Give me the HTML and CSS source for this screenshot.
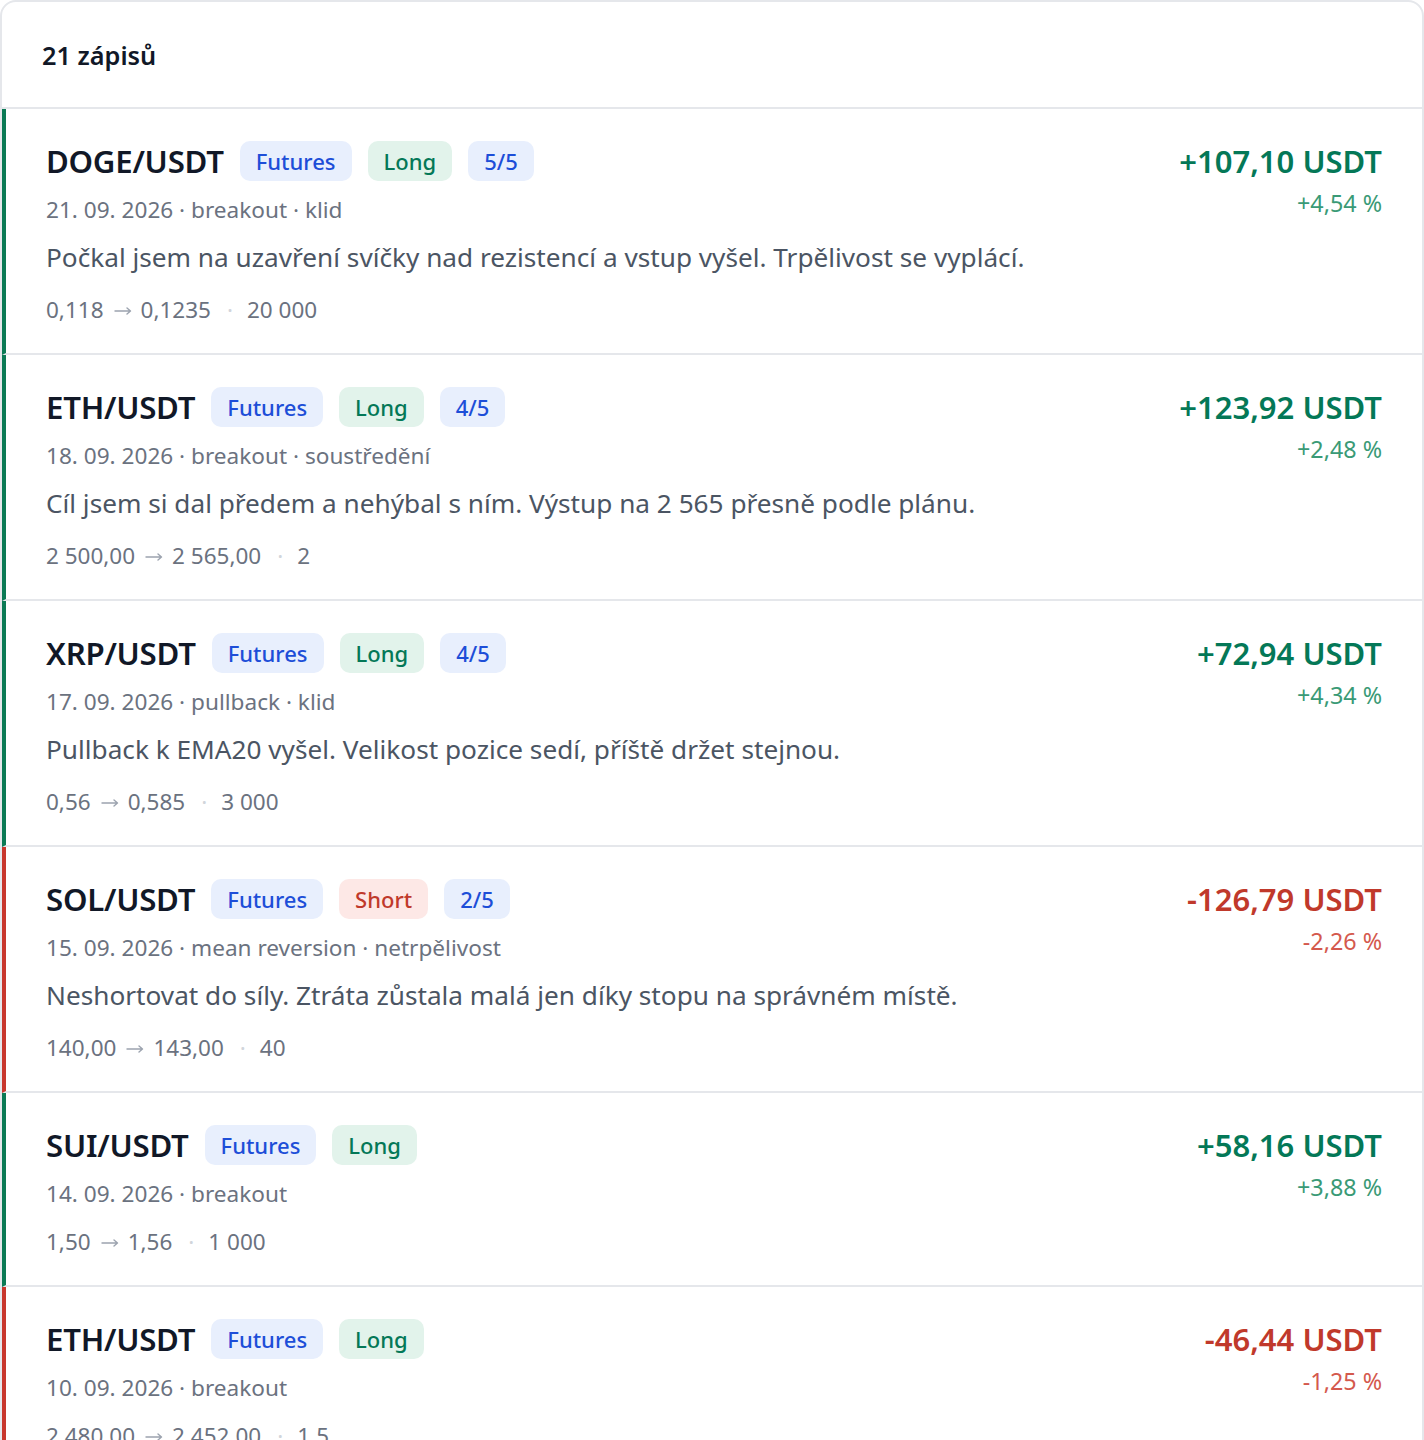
FILE: index.html
```html
<!DOCTYPE html>
<html lang="cs">
<head>
<meta charset="utf-8">
<title>Deník obchodů</title>
<link rel="stylesheet" href="styles.css">
</head>
<body>
<section class="card">
  <header class="card-head">21 zápisů</header>
  <ul class="list">
    <li class="entry win">
      <div class="main">
        <div class="title-row"><span class="pair">DOGE/USDT</span><span class="badge blue">Futures</span><span class="badge green">Long</span><span class="badge blue">5/5</span></div>
        <div class="meta">21. 09. 2026 · breakout · klid</div>
        <p class="note">Počkal jsem na uzavření svíčky nad rezistencí a vstup vyšel. Trpělivost se vyplácí.</p>
        <div class="nums"><span>0,118</span><svg class="arr" viewBox="0 0 18 10"><path d="M1 5H16.5M13 2L16.5 5L13 8"/></svg><span>0,1235</span><span class="dot">·</span><span>20 000</span></div>
      </div>
      <div class="pnl"><div class="amt">+107,10 USDT</div><div class="pct">+4,54 %</div></div>
    </li>
    <li class="entry win">
      <div class="main">
        <div class="title-row"><span class="pair">ETH/USDT</span><span class="badge blue">Futures</span><span class="badge green">Long</span><span class="badge blue">4/5</span></div>
        <div class="meta">18. 09. 2026 · breakout · soustředění</div>
        <p class="note">Cíl jsem si dal předem a nehýbal s ním. Výstup na 2 565 přesně podle plánu.</p>
        <div class="nums"><span>2 500,00</span><svg class="arr" viewBox="0 0 18 10"><path d="M1 5H16.5M13 2L16.5 5L13 8"/></svg><span>2 565,00</span><span class="dot">·</span><span>2</span></div>
      </div>
      <div class="pnl"><div class="amt">+123,92 USDT</div><div class="pct">+2,48 %</div></div>
    </li>
    <li class="entry win">
      <div class="main">
        <div class="title-row"><span class="pair">XRP/USDT</span><span class="badge blue">Futures</span><span class="badge green">Long</span><span class="badge blue">4/5</span></div>
        <div class="meta">17. 09. 2026 · pullback · klid</div>
        <p class="note">Pullback k EMA20 vyšel. Velikost pozice sedí, příště držet stejnou.</p>
        <div class="nums"><span>0,56</span><svg class="arr" viewBox="0 0 18 10"><path d="M1 5H16.5M13 2L16.5 5L13 8"/></svg><span>0,585</span><span class="dot">·</span><span>3 000</span></div>
      </div>
      <div class="pnl"><div class="amt">+72,94 USDT</div><div class="pct">+4,34 %</div></div>
    </li>
    <li class="entry loss">
      <div class="main">
        <div class="title-row"><span class="pair">SOL/USDT</span><span class="badge blue">Futures</span><span class="badge red">Short</span><span class="badge blue">2/5</span></div>
        <div class="meta">15. 09. 2026 · mean reversion · netrpělivost</div>
        <p class="note">Neshortovat do síly. Ztráta zůstala malá jen díky stopu na správném místě.</p>
        <div class="nums"><span>140,00</span><svg class="arr" viewBox="0 0 18 10"><path d="M1 5H16.5M13 2L16.5 5L13 8"/></svg><span>143,00</span><span class="dot">·</span><span>40</span></div>
      </div>
      <div class="pnl"><div class="amt">-126,79 USDT</div><div class="pct">-2,26 %</div></div>
    </li>
    <li class="entry win">
      <div class="main">
        <div class="title-row"><span class="pair">SUI/USDT</span><span class="badge blue">Futures</span><span class="badge green">Long</span></div>
        <div class="meta">14. 09. 2026 · breakout</div>
        <div class="nums"><span>1,50</span><svg class="arr" viewBox="0 0 18 10"><path d="M1 5H16.5M13 2L16.5 5L13 8"/></svg><span>1,56</span><span class="dot">·</span><span>1 000</span></div>
      </div>
      <div class="pnl"><div class="amt">+58,16 USDT</div><div class="pct">+3,88 %</div></div>
    </li>
    <li class="entry loss">
      <div class="main">
        <div class="title-row"><span class="pair">ETH/USDT</span><span class="badge blue">Futures</span><span class="badge green">Long</span></div>
        <div class="meta">10. 09. 2026 · breakout</div>
        <div class="nums"><span>2 480,00</span><svg class="arr" viewBox="0 0 18 10"><path d="M1 5H16.5M13 2L16.5 5L13 8"/></svg><span>2 452,00</span><span class="dot">·</span><span>1,5</span></div>
      </div>
      <div class="pnl"><div class="amt">-46,44 USDT</div><div class="pct">-1,25 %</div></div>
    </li>
  </ul>
</section>
</body>
</html>
```

FILE: styles.css
```css
* { box-sizing: border-box; }
html, body { margin: 0; padding: 0; background: #ffffff; }
body {
  font-family: "Noto Sans", "Open Sans", "Liberation Sans", sans-serif;
  color: #111827;
}
.card {
  border: 2px solid #e5e7eb;
  border-radius: 16px;
  background: #ffffff;
  overflow: hidden;
}
.card-head {
  padding: 0 40px;
  height: 107px;
  display: flex;
  align-items: center;
  font-size: 25.3px;
  font-weight: 600;
  color: #111827;
  border-bottom: 2px solid #e5e7eb;
}
.list { list-style: none; margin: 0; padding: 0; }
.entry {
  display: flex;
  justify-content: space-between;
  align-items: flex-start;
  padding: 32px 40px 26px 40px;
  border-left: 4px solid #0b7a55;
  border-bottom: 2px solid #e5e7eb;
}
.entry.loss { border-left-color: #c8372d; }
.main { display: flex; flex-direction: column; }
.title-row { display: flex; align-items: center; gap: 16px; height: 40px; }
.pair { font-size: 31.2px; font-weight: 600; color: #111827; letter-spacing: -0.25px; }
.badge {
  height: 40px;
  display: inline-flex;
  align-items: center;
  padding: 0 16px;
  border-radius: 10px;
  font-size: 22px;
  font-weight: 500;
}
.badge.blue { background: #e8effd; color: #1d4ed8; }
.badge.green { background: #e2f3eb; color: #047857; }
.badge.red { background: #fde8e6; color: #c0392b; }
.meta { margin-top: 13px; font-size: 22.6px; line-height: 32px; color: #6b7280; }
.note { margin: 12px 0 0; font-size: 26.2px; line-height: 38px; color: #4b5563; }
.nums {
  margin-top: 17px;
  height: 34px;
  font-size: 22.5px;
  line-height: 32px;
  color: #6b7280;
  display: flex;
  align-items: center;
}
.meta + .nums { margin-top: 15px; }
.nums .arr {
  width: 18px;
  height: 10px;
  margin: 2px 9px 0 10px;
  fill: none;
  stroke: #9ca3af;
  stroke-width: 1.4;
  stroke-linecap: round;
  stroke-linejoin: round;
}
.nums .dot { color: #d1d5db; margin: 0 14px 0 16px; }
.pnl { text-align: right; display: flex; flex-direction: column; }
.amt { font-size: 31px; font-weight: 600; line-height: 40px; color: #047857; }
.pct { margin-top: 7px; font-size: 23.3px; line-height: 30px; color: #3a9a76; }
.loss .amt { color: #c0392b; }
.loss .pct { color: #d4594d; }
```
